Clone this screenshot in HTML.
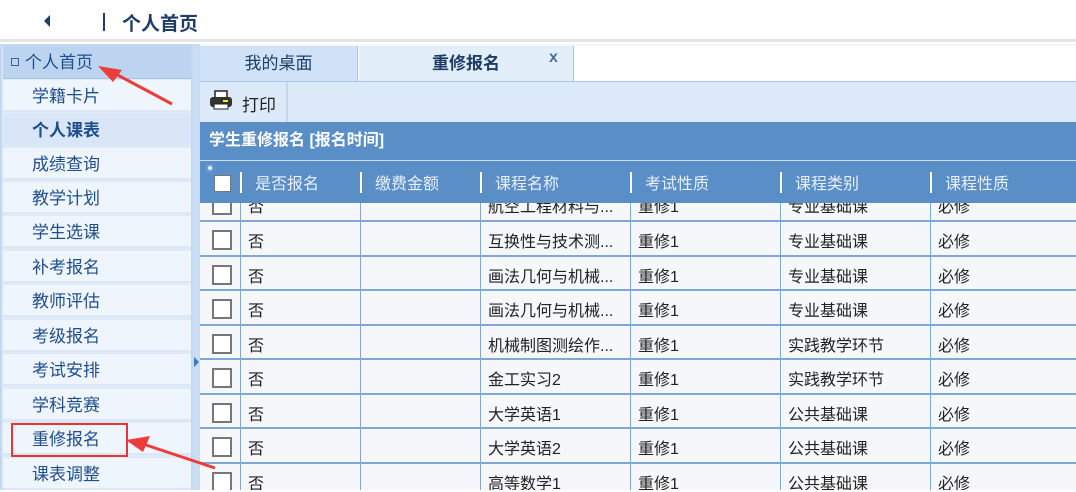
<!DOCTYPE html>
<html><head><meta charset="utf-8"><style>
*{margin:0;padding:0;box-sizing:border-box}
body{width:1076px;height:490px;overflow:hidden;background:#fff;font-family:"Liberation Sans","Noto Sans CJK SC",sans-serif;position:relative}
.a{position:absolute}
.top{left:0;top:0;width:1076px;height:42px;background:#fff;border-bottom:3px solid #e4e4e4}
.side{left:0;top:44px;width:193px;height:446px;background:#dfeaf7;border:2px solid #c4d9f1}
.si{position:absolute;left:3px;width:188px;height:32px;background:#eef5fd;border-bottom:2px solid #dbe7f5;color:#1f4e8c;font-size:17px;line-height:34px;padding-left:29px}
.split{left:193px;top:44px;width:7px;height:446px;background:#c8ddf4}
.main{left:200px;top:44px;width:876px;height:446px;background:#f5f7fa}
.cell{position:absolute;font-size:16px;color:#222;white-space:nowrap;overflow:hidden}
.hl{position:absolute;width:1px;background:#7ea8d6}
.cb{position:absolute;width:20px;height:20px;border:2px solid #777;background:#fff}
</style></head><body>
<div class="a top">
 <div class="a" style="left:44px;top:15px;width:0;height:0;border-top:6px solid transparent;border-bottom:6px solid transparent;border-right:6px solid #1f3d66"></div>
 <div class="a" style="left:103px;top:13px;width:2px;height:18px;background:#1f3d66"></div>
 <div class="a" style="left:122px;top:9px;font-size:19px;font-weight:bold;color:#1f3d66">个人首页</div>
</div>
<div class="a side"></div>
<div class="a" style="left:3px;top:46px;width:188px;height:33px;background:#bcd4ef;border-bottom:1px solid #a7c3e6;color:#1f4e8c;font-size:17px;line-height:33px;padding-left:8px"><span style="display:inline-block;width:8px;height:8px;border:1px solid #44628a;margin-right:6px;vertical-align:2px"></span>个人首页</div>
<div class="si" style="top:80px">学籍卡片</div>
<div class="si" style="top:114px;background:#d8e6f7;font-weight:bold">个人课表</div>
<div class="si" style="top:148px">成绩查询</div>
<div class="si" style="top:182px">教学计划</div>
<div class="si" style="top:216px">学生选课</div>
<div class="si" style="top:251px">补考报名</div>
<div class="si" style="top:285px">教师评估</div>
<div class="si" style="top:320px">考级报名</div>
<div class="si" style="top:354px">考试安排</div>
<div class="si" style="top:389px">学科竞赛</div>
<div class="si" style="top:423px">重修报名</div>
<div class="si" style="top:458px">课表调整</div>
<div class="a" style="left:11px;top:423px;width:117px;height:34px;border:2px solid #ee3333"></div>
<div class="a split"><div class="a" style="left:1px;top:313px;border-top:5px solid transparent;border-bottom:5px solid transparent;border-left:5px solid #3a78c0"></div></div>
<div class="a main"></div>
<!-- tabs -->
<div class="a" style="left:200px;top:46px;width:876px;height:36px;background:#fff;border-bottom:1px solid #a9c4e4"></div>
<div class="a" style="left:200px;top:46px;width:158px;height:35px;background:#cfe2f8;border-right:1px solid #a9c4e4;text-align:center;line-height:35px;font-size:17px;color:#1f3d66">我的桌面</div>
<div class="a" style="left:359px;top:46px;width:215px;height:35px;background:#e3eefb;border-right:1px solid #a9c4e4;text-align:center;line-height:35px;font-size:17px;font-weight:bold;color:#1f3d66">重修报名</div>
<div class="a" style="left:549px;top:49px;font-size:16px;font-weight:bold;color:#4a6f9e">x</div>
<!-- toolbar -->
<div class="a" style="left:200px;top:82px;width:876px;height:40px;background:#dbe9f9"></div>
<div class="a" style="left:200px;top:82px;width:88px;height:40px;background:#dce9f8;border-right:2px solid #c3d7ef"></div>
<svg class="a" style="left:208px;top:90px" width="26" height="22" viewBox="0 0 26 22"><rect x="7" y="1" width="12" height="7" fill="#fff" stroke="#222" stroke-width="1.5"/><rect x="2" y="7" width="22" height="10" rx="3" fill="#333"/><rect x="6" y="14" width="14" height="5" fill="#fff" stroke="#222"/><rect x="15" y="10" width="5" height="2" fill="#ee3"/></svg>
<div class="a" style="left:242px;top:91px;font-size:17px;color:#222">打印</div>
<!-- title -->
<div class="a" style="left:200px;top:122px;width:876px;height:38px;background:#5a8ec6;color:#fff;font-weight:bold;font-size:16px;line-height:38px;padding-left:9px">学生重修报名 [报名时间]</div>
<div class="a" style="left:200px;top:160px;width:876px;height:1px;background:#cfe0f3"></div>
<!-- header -->
<div class="a" style="left:200px;top:161px;width:876px;height:42px;background:#5a8ec6"></div>
<div class="a" style="left:206px;top:164px;width:8px;height:8px;border-radius:50%;background:#dfefff;border:2px solid #6aa0d8"></div>
<div class="a" style="left:214px;top:175px;width:17px;height:17px;background:#fff;border:1px solid #777"></div>
<div class="a" style="left:200px;top:161px;width:876px;height:42px;color:#e8f0fa;font-size:16px">
 <div class="a" style="left:40px;top:11px;width:2px;height:21px;background:#fff"></div><div class="a" style="left:55px;top:9px">是否报名</div>
 <div class="a" style="left:160px;top:11px;width:2px;height:21px;background:#fff"></div><div class="a" style="left:175px;top:9px">缴费金额</div>
 <div class="a" style="left:280px;top:11px;width:2px;height:21px;background:#fff"></div><div class="a" style="left:295px;top:9px">课程名称</div>
 <div class="a" style="left:430px;top:11px;width:2px;height:21px;background:#fff"></div><div class="a" style="left:445px;top:9px">考试性质</div>
 <div class="a" style="left:580px;top:11px;width:2px;height:21px;background:#fff"></div><div class="a" style="left:595px;top:9px">课程类别</div>
 <div class="a" style="left:730px;top:11px;width:2px;height:21px;background:#fff"></div><div class="a" style="left:745px;top:9px">课程性质</div>
</div>
<!-- rows -->
<div class="a" style="left:200px;top:203px;width:876px;height:287px;overflow:hidden">
 <div class="hl" style="left:40px;top:0;height:287px"></div>
 <div class="hl" style="left:160px;top:0;height:287px"></div>
 <div class="hl" style="left:280px;top:0;height:287px"></div>
 <div class="hl" style="left:430px;top:0;height:287px"></div>
 <div class="hl" style="left:580px;top:0;height:287px"></div>
 <div class="hl" style="left:730px;top:0;height:287px"></div>
 <div class="a" style="left:0;top:-16px;width:876px">
  <div style="position:relative;height:35px;border-bottom:2px solid #7ea8d6"><div class="cb" style="left:12px;top:8px"></div><div class="cell" style="left:48px;top:6px">否</div><div class="cell" style="left:288px;top:6px;width:140px">航空工程材料与...</div><div class="cell" style="left:438px;top:6px">重修1</div><div class="cell" style="left:588px;top:6px">专业基础课</div><div class="cell" style="left:738px;top:6px">必修</div></div>
  <div style="position:relative;height:34.5px;border-bottom:2px solid #7ea8d6"><div class="cb" style="left:12px;top:8px"></div><div class="cell" style="left:48px;top:6px">否</div><div class="cell" style="left:288px;top:6px">互换性与技术测...</div><div class="cell" style="left:438px;top:6px">重修1</div><div class="cell" style="left:588px;top:6px">专业基础课</div><div class="cell" style="left:738px;top:6px">必修</div></div>
  <div style="position:relative;height:34.5px;border-bottom:2px solid #7ea8d6"><div class="cb" style="left:12px;top:8px"></div><div class="cell" style="left:48px;top:6px">否</div><div class="cell" style="left:288px;top:6px">画法几何与机械...</div><div class="cell" style="left:438px;top:6px">重修1</div><div class="cell" style="left:588px;top:6px">专业基础课</div><div class="cell" style="left:738px;top:6px">必修</div></div>
  <div style="position:relative;height:34.5px;border-bottom:2px solid #7ea8d6"><div class="cb" style="left:12px;top:8px"></div><div class="cell" style="left:48px;top:6px">否</div><div class="cell" style="left:288px;top:6px">画法几何与机械...</div><div class="cell" style="left:438px;top:6px">重修1</div><div class="cell" style="left:588px;top:6px">专业基础课</div><div class="cell" style="left:738px;top:6px">必修</div></div>
  <div style="position:relative;height:34.5px;border-bottom:2px solid #7ea8d6"><div class="cb" style="left:12px;top:8px"></div><div class="cell" style="left:48px;top:6px">否</div><div class="cell" style="left:288px;top:6px">机械制图测绘作...</div><div class="cell" style="left:438px;top:6px">重修1</div><div class="cell" style="left:588px;top:6px">实践教学环节</div><div class="cell" style="left:738px;top:6px">必修</div></div>
  <div style="position:relative;height:34.5px;border-bottom:2px solid #7ea8d6"><div class="cb" style="left:12px;top:8px"></div><div class="cell" style="left:48px;top:6px">否</div><div class="cell" style="left:288px;top:6px">金工实习2</div><div class="cell" style="left:438px;top:6px">重修1</div><div class="cell" style="left:588px;top:6px">实践教学环节</div><div class="cell" style="left:738px;top:6px">必修</div></div>
  <div style="position:relative;height:34.5px;border-bottom:2px solid #7ea8d6"><div class="cb" style="left:12px;top:8px"></div><div class="cell" style="left:48px;top:6px">否</div><div class="cell" style="left:288px;top:6px">大学英语1</div><div class="cell" style="left:438px;top:6px">重修1</div><div class="cell" style="left:588px;top:6px">公共基础课</div><div class="cell" style="left:738px;top:6px">必修</div></div>
  <div style="position:relative;height:34.5px;border-bottom:2px solid #7ea8d6"><div class="cb" style="left:12px;top:8px"></div><div class="cell" style="left:48px;top:6px">否</div><div class="cell" style="left:288px;top:6px">大学英语2</div><div class="cell" style="left:438px;top:6px">重修1</div><div class="cell" style="left:588px;top:6px">公共基础课</div><div class="cell" style="left:738px;top:6px">必修</div></div>
  <div style="position:relative;height:34.5px;border-bottom:2px solid #7ea8d6"><div class="cb" style="left:12px;top:8px"></div><div class="cell" style="left:48px;top:6px">否</div><div class="cell" style="left:288px;top:6px">高等数学1</div><div class="cell" style="left:438px;top:6px">重修1</div><div class="cell" style="left:588px;top:6px">公共基础课</div><div class="cell" style="left:738px;top:6px">必修</div></div>
 </div>
</div>
<!-- arrows -->
<svg class="a" style="left:0;top:0" width="1076" height="490">
 <line x1="172" y1="104" x2="112" y2="72" stroke="#ee3b3b" stroke-width="3"/>
 <polygon points="98,66 122,70 113,82" fill="#ee3b3b"/>
 <line x1="215" y1="468" x2="140" y2="443" stroke="#ee3b3b" stroke-width="3"/>
 <polygon points="126,440 150,436 143,452" fill="#ee3b3b"/>
</svg>
</body></html>
